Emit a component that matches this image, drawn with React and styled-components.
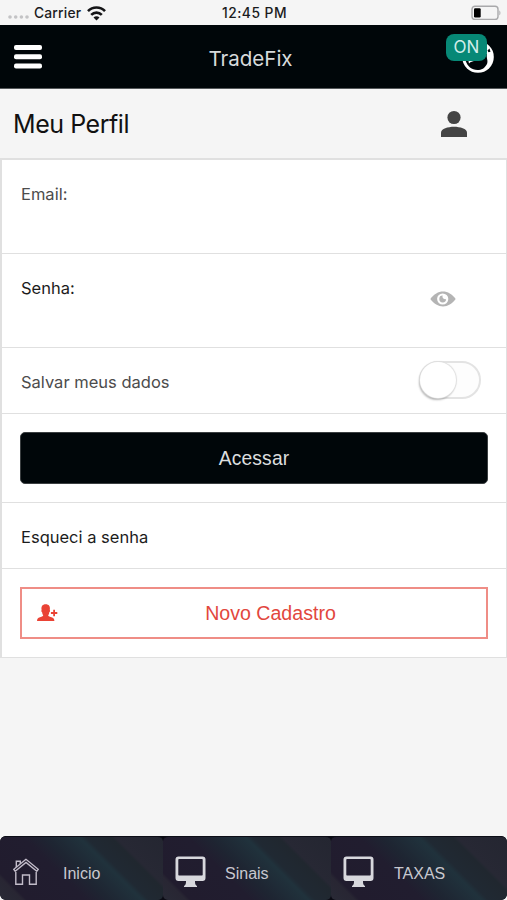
import React, { useState } from 'react';
import styled, { createGlobalStyle } from 'styled-components';

const GlobalStyle = createGlobalStyle`
  * {
    box-sizing: border-box;
  }
  body {
    margin: 0;
    background-color: #f5f5f5;
    font-family: Inter, "Liberation Sans", sans-serif;
  }
  button {
    font-family: inherit;
    cursor: pointer;
  }
`;

const Page = styled.div`
  display: flex;
  flex-direction: column;
  height: 900px;
  overflow: hidden;
  background-color: #f5f5f5;
`;

const StatusBar = styled.div`
  display: grid;
  grid-template-columns: 1fr auto 1fr;
  align-items: center;
  height: 25px;
  padding: 1px 6px 0 8px;
  font-size: 13.8px;
  font-weight: 500;
  color: #1b1b1d;
`;

const Carrier = styled.div`
  display: flex;
  align-items: center;

  span {
    margin: 0 6px 0 5px;
    letter-spacing: 0.2px;
  }
`;

const Clock = styled.div`
  letter-spacing: 0.5px;
`;

const Battery = styled.svg`
  justify-self: end;
`;

const Header = styled.header`
  display: grid;
  grid-template-columns: 60px 1fr 60px;
  align-items: center;
  height: 64px;
  padding: 0 8px 0 13px;
  background-color: #000609;
  border-bottom: 1px solid #55595b;
`;

const IconButton = styled.button`
  display: flex;
  padding: 0;
  border: none;
  background: none;
`;

const AppName = styled.h1`
  margin: 3px 0 0 -11px;
  font-size: 20.6px;
  font-weight: 400;
  letter-spacing: -0.05px;
  text-align: center;
  color: #d7dadb;
`;

const GlobeButton = styled(IconButton)`
  position: relative;
  justify-self: end;
  margin-right: 5px;
`;

const OnBadge = styled.span`
  position: absolute;
  top: -7px;
  left: -16px;
  width: 41px;
  height: 27px;
  border-radius: 8px;
  background-color: #078876;
  color: #d3eeea;
  font-size: 17px;
  line-height: 27px;
  text-align: center;
`;

const TitleRow = styled.div`
  display: flex;
  align-items: center;
  justify-content: space-between;
  height: 69px;
  padding: 0 40px 0 13px;
`;

const Title = styled.h2`
  margin: 0;
  font-size: 25px;
  font-weight: 400;
  letter-spacing: -0.45px;
  color: #111;
`;

const Card = styled.form`
  border: 1px solid #e0e0e0;
  border-width: 2px 1px 1px 2px;
  background-color: #fff;
`;

const Row = styled.div`
  display: flex;
  align-items: ${(props) => (props.$top ? 'flex-start' : 'center')};
  justify-content: space-between;
  height: ${(props) => props.$height}px;
  padding: ${(props) => (props.$top ? '24px 18px 0' : '0 18px 1px')};
  border-bottom: 1px solid #e0e0e0;

  &:last-child {
    border-bottom: none;
  }
`;

const Label = styled.label`
  padding: ${(props) => (props.$low ? '3px' : '0')} 0 0 1px;
  font-size: 16.5px;
  line-height: 20px;
  color: ${(props) => (props.$dark ? '#1c1c1c' : '#4c4c4c')};
`;

const EyeButton = styled(IconButton)`
  margin: 13px 32px 0 0;
`;

const Toggle = styled.button`
  display: flex;
  justify-content: ${(props) => (props.$on ? 'flex-end' : 'flex-start')};
  width: 62px;
  height: 38px;
  margin-right: 7px;
  padding: 0;
  border: 2px solid #e3e3e3;
  border-radius: 19px;
  background-color: ${(props) => (props.$on ? '#078876' : '#fdfdfd')};
`;

const Knob = styled.span`
  width: 36px;
  height: 36px;
  margin: -1px 0 0 -1px;
  border-radius: 50%;
  background-color: #fff;
  box-shadow: 0 0 1px 1px #dedede, -1px 2px 2px rgba(0, 0, 0, 0.3);
`;

const SubmitButton = styled.button`
  width: 100%;
  height: 52px;
  padding: 2px 0 0;
  border: 1px solid #3b3f41;
  border-radius: 5px;
  background-color: #000609;
  color: #dcdedf;
  && {
    font-family: "Liberation Sans", Arial, sans-serif;
  }
  font-size: 19.3px;
  letter-spacing: 0.15px;
`;

const RegisterButton = styled.button`
  display: grid;
  grid-template-columns: 34px 1fr;
  align-items: center;
  width: 100%;
  height: 52px;
  padding: 1px 16px 0 15px;
  border: 2px solid #ef8d86;
  background-color: #fff;
  color: #e2473d;
  && {
    font-family: "Liberation Sans", Arial, sans-serif;
  }
  font-size: 19.6px;
`;

const TabBar = styled.nav`
  display: grid;
  grid-template-columns: 163px 168px 1fr;
  height: 64px;
  margin-top: auto;
  border-radius: 6px;
  overflow: hidden;
  background-color: #0b0b14;
`;

const Tab = styled.a`
  display: flex;
  align-items: center;
  gap: ${(props) => props.$gap}px;
  padding: 7px 0 0 12px;
  border-top: 1px solid #0d0e17;
  border-radius: 5px;
  background: linear-gradient(
    45deg,
    #292a36 0%,
    #282633 10%,
    #211c2e 12%,
    #211d2f 38%,
    #1e2532 48%,
    #20323c 63%,
    #202933 66%,
    #20272f 77%,
    #272834 79%,
    #242631 100%
  );
  color: #c8c8cf;
  font-family: "Liberation Sans", Arial, sans-serif;
  font-size: 16px;
  text-decoration: none;

  span {
    padding-top: 3px;
  }
`;

const SignalDots = () => (
  <svg width="21" height="18" viewBox="0 0 21 18" fill="#c3c3c5">
    <circle cx="2" cy="13" r="1.8" />
    <circle cx="7.7" cy="13" r="1.8" />
    <circle cx="13.4" cy="13" r="1.8" />
    <circle cx="19" cy="13" r="1.8" />
  </svg>
);

const WifiIcon = () => (
  <svg width="19" height="15" viewBox="0 0 19 15" fill="none" stroke="#151517" strokeWidth="2.6">
    <path d="M1 5.2C5.7.3 13.3.3 18 5.2" />
    <path d="M4.2 8.9C7.2 5.9 11.8 5.9 14.8 8.9" />
    <path d="M9.5 14.4 6.5 11.4C8.2 9.7 10.8 9.7 12.5 11.4Z" fill="#151517" stroke="none" />
  </svg>
);

const BatteryIcon = () => (
  <Battery width="30" height="16" viewBox="0 0 30 16">
    <rect x="1" y="1.2" width="26" height="13.2" rx="3" fill="none" stroke="#a9a9ab" strokeWidth="1.4" />
    <rect x="3" y="3.2" width="6.7" height="9.2" rx="1.2" fill="#000" />
    <path d="M28.4 5.5c1.3.6 1.3 4.2 0 4.8z" fill="#a9a9ab" />
  </Battery>
);

const MenuIcon = () => (
  <svg width="30" height="26" viewBox="0 0 30 26" fill="#fff">
    <rect x="1" y="1" width="28" height="5" rx="2" />
    <rect x="1" y="10.3" width="28" height="5" rx="2" />
    <rect x="1" y="19.5" width="28" height="5" rx="2" />
  </svg>
);

const GlobeIcon = () => (
  <svg width="32" height="32" viewBox="0 0 32 32">
    <circle cx="16" cy="16" r="15.8" fill="#fff" />
    <path d="M3.5 19.5C7 17.5 6.5 21 7 22.5C9 20 13 20.5 15 18.5C17 16 19 15.5 20.5 13.5L25 13C24 17 26.5 19.5 25 23C22.500 27.500 19.500 29 15.500 29C9.500 28.800 5.500 25.500 3.500 19.500Z" fill="#000609" />
    <path d="M25.5 9.5 27.5 7.5 28.5 10.800 26.500 11.300Z" fill="#000609" />
  </svg>
);

const PersonIcon = () => (
  <svg width="26" height="28" viewBox="0 0 26 28" fill="#444">
    <circle cx="13" cy="7.500" r="6.600" />
    <path d="M0 27V22.5C0 18.8 7 16.7 13 16.7S26 18.8 26 22.5V27Z" />
  </svg>
);

const EyeIcon = () => (
  <svg width="26" height="16" viewBox="0 0 26 16">
    <path d="M.3 8C4 3.2 8.2.6 13 .6S22 3.2 25.7 8C22 12.8 17.8 15.4 13 15.4S4 12.8.3 8Z" fill="#b4b4b4" />
    <circle cx="12.7" cy="8" r="5.6" fill="#fff" />
    <path d="M12.7 4.6A3.4 3.4 0 1 0 16.1 8C14.3 9 11.7 7 12.7 4.6Z" fill="#b4b4b4" />
  </svg>
);

const PersonAddIcon = () => (
  <svg width="21" height="18" viewBox="0 0 21 18" fill="#ea4335">
    <path d="M0 17C.2 14.4.8 13.8 3 13.2C5.4 12.6 6.1 12.2 6.2 11.6C5.8 10.6 5.3 9.9 5.1 8.3C4.2 7.7 4.2 6.4 4.6 5.9C4 2.4 5.5.3 8.7.3S13.4 2.4 12.8 5.9C13.2 6.4 13.2 7.7 12.3 8.3C12.1 9.9 11.6 10.6 11.2 11.6C11.3 12.2 12 12.6 14.4 13.2C16.6 13.8 17.2 14.4 17.4 17Z" />
    <path d="M16.2 5.8h1.8v2.3h2.3v1.8h-2.3v2.3h-1.8V9.9h-2.3V8.1h2.3Z" />
  </svg>
);

const HomeIcon = () => (
  <svg width="28" height="28" viewBox="0 0 28 28" fill="none" stroke="#c2bcc9" strokeWidth="1.4">
    <path d="M3.8 14V26.3H10.5V17H17.5V26.3H24.2V14" />
    <path d="M14 1.3 1.8 11.3 3.2 13.2 14 4.5 24.8 13.2 26.2 11.3Z" />
    <path d="M4.3 9.2V3.3H8.3V6" />
  </svg>
);

const DesktopIcon = () => (
  <svg width="31" height="32" viewBox="0 0 31 32" fill="#d8d8dd">
    <path fillRule="evenodd" d="M3.5.5h24a3 3 0 0 1 3 3V22a3 3 0 0 1-3 3h-7.5c0 3 .4 4.2 2 5v1h-13v-1c1.6-.8 2-2 2-5H3.5a3 3 0 0 1-3-3V3.5a3 3 0 0 1 3-3ZM4 3a.7.7 0 0 0-.7.7V18.8a.7.7 0 0 0 .7.7h23a.7.7 0 0 0 .7-.7V3.7A.7.7 0 0 0 27 3Z" />
  </svg>
);

const tabs = [
  { name: 'Inicio', icon: <HomeIcon />, gap: 23 },
  { name: 'Sinais', icon: <DesktopIcon />, gap: 19 },
  { name: 'TAXAS', icon: <DesktopIcon />, gap: 20 },
];

const App = () => {
  const [saveData, setSaveData] = useState(false);

  return (
    <Page>
      <GlobalStyle />
      <StatusBar>
        <Carrier>
          <SignalDots />
          <span>Carrier</span>
          <WifiIcon />
        </Carrier>
        <Clock>12:45 PM</Clock>
        <BatteryIcon />
      </StatusBar>
      <Header>
        <IconButton type="button"><MenuIcon /></IconButton>
        <AppName>TradeFix</AppName>
        <GlobeButton type="button">
          <GlobeIcon />
          <OnBadge>ON</OnBadge>
        </GlobeButton>
      </Header>
      <TitleRow>
        <Title>Meu Perfil</Title>
        <PersonIcon />
      </TitleRow>
      <Card>
        <Row $height={94} $top>
          <Label>Email:</Label>
        </Row>
        <Row $height={94} $top>
          <Label $dark>Senha:</Label>
          <EyeButton type="button"><EyeIcon /></EyeButton>
        </Row>
        <Row $height={66}>
          <Label $low>Salvar meus dados</Label>
          <Toggle type="button" $on={saveData} onClick={() => setSaveData(!saveData)}>
            <Knob />
          </Toggle>
        </Row>
        <Row $height={89}>
          <SubmitButton type="button">Acessar</SubmitButton>
        </Row>
        <Row $height={66}>
          <Label $dark $low>Esqueci a senha</Label>
        </Row>
        <Row $height={88}>
          <RegisterButton type="button">
            <PersonAddIcon />
            <span>Novo Cadastro</span>
          </RegisterButton>
        </Row>
      </Card>
      <TabBar>
        {tabs.map((tab) => (
          <Tab key={tab.name} $gap={tab.gap}>
            {tab.icon}
            <span>{tab.name}</span>
          </Tab>
        ))}
      </TabBar>
    </Page>
  );
};

export default App;
